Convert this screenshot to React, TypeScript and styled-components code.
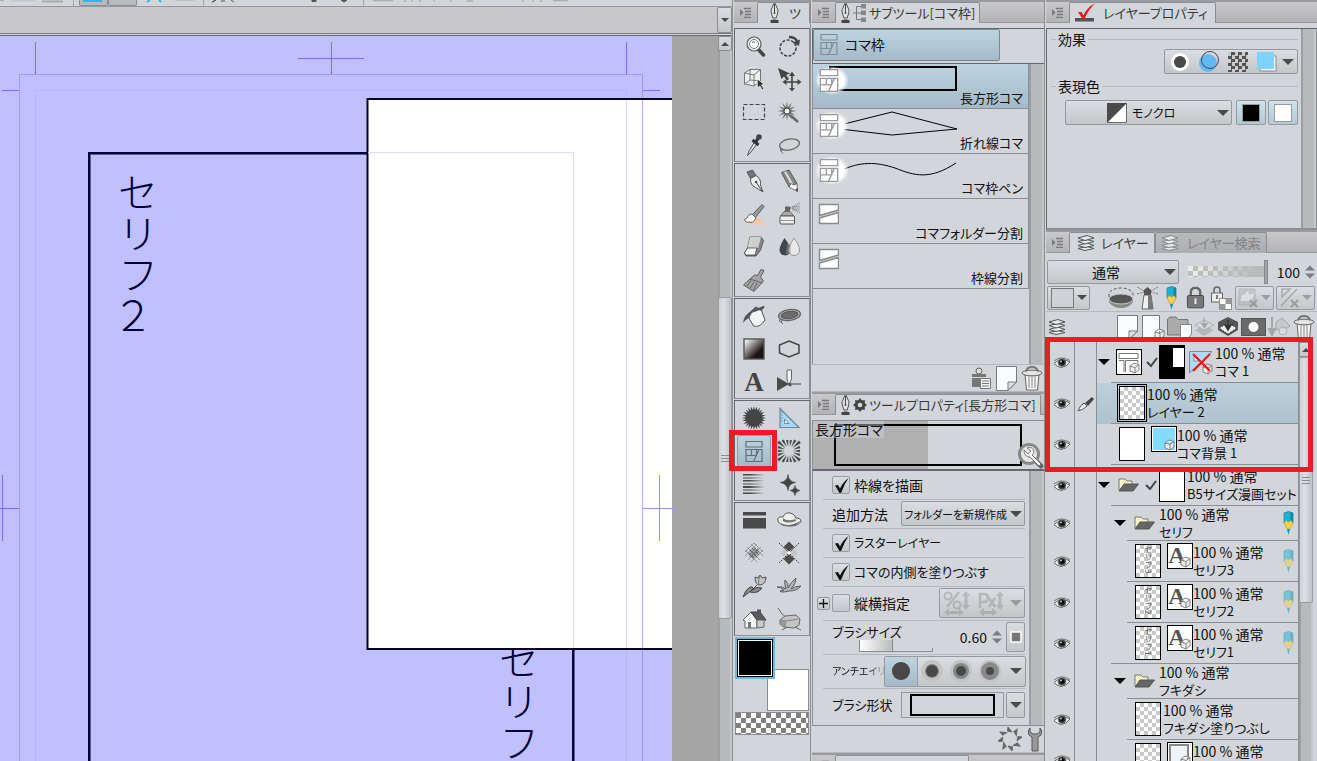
import React from 'react';
import styled, { createGlobalStyle, css } from 'styled-components';

const C = {
  panel: '#d2d6db',
  track: '#b8b9bd',
  line: '#8b8d92',
  soft: '#b6b9bd',
  dark: '#66686c',
  ink: '#4a4a4a',
  text: '#101010',
};
const blue = 'linear-gradient(#bdd4e0, #a5bac7)';
const metal = 'linear-gradient(#dadde1, #c4c6ca)';

const Global = createGlobalStyle`
  *, *::before, *::after { box-sizing: border-box; }
  body {
    margin: 0;
    background: ${C.panel};
    color: ${C.text};
    font-family: "Noto Sans CJK JP", "Liberation Sans", sans-serif;
    font-feature-settings: "palt";
    font-size: 14px;
    line-height: 18px;
  }
  button, select, input { font: inherit; font-feature-settings: inherit; color: inherit; margin: 0; }
  h2, ul, p, fieldset, legend { margin: 0; padding: 0; border: 0; font: inherit; }
  ul { list-style: none; }
  svg { display: block; flex: none; }
`;

/* ---------- layout ---------- */
const App_ = styled.div`
  display: flex;
  height: 100vh;
  overflow: hidden;
`;
const Workspace = styled.main`
  flex: 1;
  min-width: 0;
  display: flex;
  flex-direction: column;
  border-right: 1px solid ${C.line};
`;
const Dock = styled.aside<{ $w: number }>`
  flex: none;
  width: ${(p) => p.$w}px;
  display: flex;
  flex-direction: column;
  padding-left: 1px;
  min-height: 0;
  border-right: 1px solid ${C.line};
  &:last-child { border-right: 0; }
`;
const TabBar = styled.div`
  flex: none;
  display: flex;
  align-items: flex-end;
  height: 23px;
  background: linear-gradient(#c9c9cc, #b3b3b6);
  border-top: 2px solid #9a9b9f;
  border-bottom: 1px solid #97989c;
  padding-left: 1px;
`;
const MenuButton = styled.button`
  width: 22px;
  height: 20px;
  padding: 0;
  border: 0;
  background: none;
  display: grid;
  place-items: center;
`;
const Tab = styled.button<{ $active?: boolean; $w?: number }>`
  display: flex;
  align-items: center;
  gap: 2px;
  height: 21px;
  margin-bottom: -1px;
  padding: 0 4px;
  flex: ${(p) => (p.$w ? 'none' : '1')};
  width: ${(p) => (p.$w ? p.$w + 'px' : 'auto')};
  border: 1px solid ${C.line};
  border-bottom: 0;
  border-radius: 2px 2px 0 0;
  background: ${(p) => (p.$active ? C.panel : 'linear-gradient(#b9babe, #acadb1)')};
  color: ${(p) => (p.$active ? '#383838' : '#828387')};
  font-size: 13px;
  line-height: 20px;
  white-space: nowrap;
  overflow: hidden;
`;
const Flex1 = styled.div`flex: 1; min-width: 0;`;
const Spacer = styled.span<{ $w: number }>`flex: none; width: ${(p) => p.$w}px;`;
const Sized = styled.span<{ $s: number }>`font-size: ${(p) => p.$s}px;`;

/* ---------- scroll bars ---------- */
const ScrollTrack = styled.div<{ $w?: number }>`
  flex: none;
  width: ${(p) => p.$w ?? 15}px;
  background: linear-gradient(90deg, #9c9ea2 2px, ${C.track} 2px, ${C.track} 86%, #c6c7ca 86%);
  display: flex;
  flex-direction: column;
  overflow: hidden;
`;
const ScrollArrow = styled.button`
  flex: none;
  height: 15px;
  padding: 0;
  border: 1px solid ${C.line};
  border-radius: 2px;
  background: ${metal};
  display: grid;
  place-items: center;
`;
const ScrollThumb = styled.div<{ $top: number; $h: number }>`
  flex: none;
  margin-top: ${(p) => p.$top}px;
  height: ${(p) => p.$h}px;
  border: 1px solid #9b9da1;
  border-radius: 2px;
  background: linear-gradient(90deg, #cdd0d4, #dcdfe3 40%, #bdc0c4);
  display: grid;
  place-items: center;
`;
const Grip = () => (
  <svg width="8" height="9" viewBox="0 0 8 9" stroke="#8a8c90"><path d="M0 1.500h8M0 4.500h8M0 7.500h8" /></svg>
);
const Tri = ({ w = 12, up, color = C.ink }: { w?: number; up?: boolean; color?: string }) => (
  <svg width={w} height={w / 2} viewBox="0 0 12 6" fill={color}>
    <path d={up ? 'M0 6L6 0L12 6Z' : 'M0 0H12L6 6Z'} />
  </svg>
);

/* ---------- workspace ---------- */
const CommandBar = styled.div`
  flex: none;
  display: flex;
  height: 7px;
  border-bottom: 1px solid #97989c;
  overflow: hidden;
`;
const CommandGroup = styled.div<{ $w?: number }>`
  flex: ${(p) => (p.$w ? 'none' : '1')};
  width: ${(p) => (p.$w ? p.$w + 'px' : 'auto')};
  border-right: 1px solid #a3a5a9;
`;
const CommandButton = styled.button<{ $blue?: boolean }>`
  width: 29px;
  height: 6px;
  padding: 0 5px 3px 3px;
  border: 1px solid ${C.line};
  border-top: 0;
  border-radius: 0 0 2px 2px;
  background: ${(p) => (p.$blue ? 'linear-gradient(#38b4e4, #38b4e4) content-box, ' : '')}#b9babd;
`;
const DocTabs = styled.div`
  flex: none;
  display: flex;
  justify-content: flex-end;
  height: 29px;
  padding-bottom: 2px;
  background: #c8c8ca;
  border-bottom: 1px solid ${C.dark};
  box-shadow: inset 0 -1px #d8d9dc, inset 0 -2px #77787c;
`;
const DocMenu = styled(ScrollArrow)`
  width: 15px;
  height: 26px;
`;
const CanvasArea = styled.div`
  flex: 1;
  min-height: 0;
  display: flex;
  position: relative;
`;
const Paper = styled.div`
  flex: 1;
  background: #c0c0ff;
`;
const Pasteboard = styled.div`
  flex: none;
  width: 46px;
  background: #a5a5a5;
`;
const Drawing = styled.svg`
  position: absolute;
  inset: 0;
  overflow: visible;
  font-family: "Noto Sans CJK JP", sans-serif;
  font-size: 41px;
  font-weight: 300;
`;
const VerticalText = styled.text`
  writing-mode: vertical-rl;
  fill: #000038;
`;

const Canvas = () => (
  <CanvasArea>
    <Paper />
    <Pasteboard />
    <ScrollTrack $w={14}>
      <ScrollArrow aria-label="上へ"><Tri w={8} up /></ScrollArrow>
      <ScrollThumb $top={246} $h={322}><Grip /></ScrollThumb>
    </ScrollTrack>
    <Drawing width="676" height="725" viewBox="0 36 676 725">
      <VerticalText x="138" y="172">セリフ２</VerticalText>
      <VerticalText x="519" y="640">セリフ</VerticalText>
      <g fill="none" stroke="#7272ff">
        <path d="M35.500 42V74M626.500 42V74M331.500 42V74M298 58.500H364M2 90.500H19M643 90.500H660M2.500 475V541M0 508.500H19" />
        <path stroke="#9a9aff" d="M19.500 761V74.500H642.500V761" />
        <path stroke="#b4b4ff" d="M35.500 761V90.500H626.500V761" />
      </g>
      <path d="M89.500 761V153.500H368M573.500 648V761" fill="none" stroke="#5a5a9c" strokeWidth="3" />
      <path d="M89 761V153H368M573 648V761" fill="none" stroke="#05053c" strokeWidth="2" />
      <path d="M672 99H367.500V649H672" fill="#fff" stroke="#05051c" strokeWidth="2" />
      <g fill="none">
        <path stroke="#dcdcfb" d="M368 152.500H573.500V648" />
        <path stroke="#d8d8ff" d="M626.500 100V648" />
        <path stroke="#b2b2ff" d="M642.500 100V648" />
        <path stroke="#9292ff" d="M643 508.500H676M659.500 475V541" />
      </g>
    </Drawing>
  </CanvasArea>
);

/* ---------- tool icons ---------- */
const burst = (cx: number, cy: number, r: number, q: number, n: number) => {
  let d = '';
  for (let i = 0; i < n * 2; i++) {
    const a = (i * Math.PI) / n;
    const k = i % 2 ? q : r;
    d += `${i ? 'L' : 'M'}${(cx + k * Math.sin(a)).toFixed(1)} ${(cy - k * Math.cos(a)).toFixed(1)}`;
  }
  return d + 'Z';
};
const rays = (n: number) => {
  let d = '';
  for (let i = 0; i < n; i++) {
    const a = ((i + 0.5) * 2 * Math.PI) / n;
    const b = 0.11;
    const m = 11 / Math.max(Math.abs(Math.sin(a)), Math.abs(Math.cos(a)));
    d += `M${(12 + 4.5 * Math.sin(a)).toFixed(1)} ${(12 - 4.5 * Math.cos(a)).toFixed(1)}L${(12 + m * Math.sin(a - b)).toFixed(1)} ${(12 - m * Math.cos(a - b)).toFixed(1)}L${(12 + m * Math.sin(a + b)).toFixed(1)} ${(12 - m * Math.cos(a + b)).toFixed(1)}Z`;
  }
  return d;
};

const FrameGlyph = ({ color = '#7d8d96', fill = 'none' }: { color?: string; fill?: string }) => (
  <g stroke={color} strokeWidth="1.200">
    <path d="M4 2.500H20V8H4ZM4 10.500H20V22.500H4Z" fill={fill} />
    <path d="M9.500 10.500V16.500M4 16.500H14.500M17 10.500L11.500 22.500M14.500 10.500V16.500" fill="none" />
  </g>
);

const icons: Record<string, React.ReactNode> = {
  zoom: (<>
    <path d="M16 15L21.500 21" stroke="#444" strokeWidth="3.500" strokeLinecap="round" />
    <circle cx="12" cy="10" r="7" fill="#f4f4f4" stroke="#555" strokeWidth="1.200" />
    <circle cx="12" cy="10" r="4.500" fill="#fff" stroke="#777" /><path d="M10 8.500q1.500-1.500 3 0" stroke="#555" fill="none" />
  </>),
  rotate: (<>
    <circle cx="11" cy="14" r="8" fill="none" stroke="#444" strokeWidth="1.500" strokeDasharray="3 1.500" />
    <path d="M12 3q6 0 8 4" stroke="#444" strokeWidth="2.500" fill="none" /><path d="M15.500 8.500L23 5.500L22 12Z" fill="#444" />
  </>),
  cube: (<>
    <path d="M2.500 6L8 2.500H18.500V14L12 19L2.500 17Z" fill="#f0f1f2" />
    <path d="M2.500 6L8 2.500H18.500V14L12 19L2.500 17ZM2.500 6L12 8V19M12 8L18.500 2.500M8 2.500V13L2.500 17M8 13L18.500 14" fill="none" stroke="#777" />
    <path d="M15 12L22 17L19.500 18L22 22L20 23L18 19L15.500 21Z" fill="#333" stroke="#fff" strokeWidth=".7" />
  </>),
  move: (<>
    <path d="M1 1L13 6.500L9 8L12 12L10 13.500L7 9.500L4.500 12Z" fill="#444" />
    <path d="M15 7V23M7 15H23" stroke="#444" strokeWidth="1.600" />
    <path d="M15 4.500L12 9H18ZM15 24.500L12 21H18ZM5.500 15L9.500 12V18ZM24.500 15L20.500 12V18Z" fill="#444" />
  </>),
  marquee: <rect x="1.500" y="4.500" width="21" height="15" fill="none" stroke="#444" strokeWidth="1.200" strokeDasharray="4 2" />,
  wand: (<>
    <path d="M13 15L21 22" stroke="#666" strokeWidth="2.500" /><path d={burst(10, 11, 9.5, 4, 12)} fill="#777" />
    <circle cx="10" cy="11" r="3" fill="#f5f5f5" stroke="#444" />
  </>),
  dropper: (<>
    <path d="M12.500 9L7 18L5.500 22.500L9 19L15 11" fill="#ddd" stroke="#555" />
    <path d="M10.500 7L16.500 12M14 9L16.500 4" stroke="#333" strokeWidth="3" /><circle cx="17" cy="4" r="2.800" fill="#444" />
  </>),
  lasso: (<>
    <ellipse cx="12.500" cy="11.500" rx="10" ry="5.500" transform="rotate(-10 12.500 11.500)" fill="none" stroke="#666" strokeWidth="1.300" />
    <path d="M4 15q-1.500 2.500 0 3q2 0 1-2.500M4 18l2 2.500" stroke="#666" fill="none" />
  </>),
  pen: (<>
    <path d="M5 3L10.500 1L14 6.500L8.500 9.500Z" fill="#777" stroke="#444" strokeWidth=".8" />
    <path d="M8.500 9.500L14 6.500Q19.500 10 18.500 16L21 23L13.500 18.500Q8 16 8.500 9.500Z" fill="#eee" stroke="#555" />
    <circle cx="14" cy="13" r="1.200" fill="#444" /><path d="M14 13L20 22" stroke="#444" />
  </>),
  pencil: (<>
    <path d="M4.500 3.500L12 1L20 14.500L12 18Z" fill="#888" stroke="#444" strokeWidth=".8" /><path d="M8 2.500L15.500 16" stroke="#ddd" strokeWidth="2" />
    <path d="M12 18L14 14.500L17 16L20 14.500L20.500 22.500Z" fill="#f6f6f6" stroke="#555" strokeWidth=".8" /><path d="M18.500 20.500L20.500 23V19Z" fill="#333" />
  </>),
  brush: (<>
    <path d="M3 18L10 16L21 16.500L18 18.500L24 22.500H7Z" fill="#f9c6a0" />
    <path d="M10 13L20 2.500L22 4.500L13 16Z" fill="#999" stroke="#444" strokeWidth=".8" />
    <path d="M10 12L14 16Q11 22 7 20Q3 21 2.500 17.500Q5 17 6 14Q8 11.500 10 12Z" fill="#f6f6f6" stroke="#666" />
  </>),
  airbrush: (<>
    <path d="M13 6L23 1M13 6L23 11M15 6H23M16 5L23 4M16 7L23 8.500" stroke="#777" strokeDasharray="1.500 1" />
    <path d="M8 4.500H13V9.500H8Z" fill="#666" /><path d="M7 9.500H13L17 14H3.500Z" fill="#aaa" stroke="#555" strokeWidth=".8" />
    <rect x="3" y="14" width="14.500" height="8" rx="1" fill="#eee" stroke="#555" /><path d="M4 18.500H17" stroke="#999" />
  </>),
  eraser: (<>
    <path d="M8 2H19L21.500 5.500L18.500 15L14 21H4L2.500 18L5.500 13Z" fill="#888" stroke="#444" strokeWidth=".8" />
    <path d="M8 2H19L16 13L5.500 13Z" fill="#d0d0d0" /><path d="M5.500 13H15L13 20H4L2.500 18Z" fill="#f8f8f8" stroke="#444" strokeWidth=".8" />
  </>),
  drops: (<>
    <path d="M7.500 3Q13.500 11 13.500 15A5.500 5.500 0 0 1 2.500 15Q2.500 11 7.500 3Z" fill="#3f474d" />
    <path d="M17 3Q23 11 22.500 15A5.500 5.500 0 0 1 11.500 15Q12 11 17 3Z" fill="#e9e9e9" stroke="#888" strokeWidth=".8" /><path d="M10 9L13.500 9V19L9 19Z" fill="#888" opacity=".6" />
  </>),
  blend: (<>
    <path d="M19 1.500L22 2.500L18.500 9L21.500 13L12 23.500L1.500 17L8 11L12.500 7L15.500 7.500Z" fill="#a6a6a6" stroke="#5a5a5a" />
    <path d="M8 11L20 15M5 18L9 12.500M8 20L12 14M11.500 22L15 15" stroke="#5f5f5f" fill="none" />
  </>),
  bucket: (<>
    <path d="M8 9L19 5L23 16Q18 24 11.500 22L7 14Z" fill="#f4f4f4" stroke="#555" />
    <path d="M19 6L22 2.500L12 7M7 10L14 3.500L19 6" fill="none" stroke="#555" strokeWidth="1.800" /><path d="M1 19Q2 10 10 7L9 11Q7 12 7 14Q4 15 1 19Z" fill="#555" />
  </>),
  lassoFill: (<>
    <ellipse cx="12.500" cy="11" rx="11" ry="5.500" transform="rotate(-8 12.500 11)" fill="#b5b5b5" stroke="#666" strokeWidth="1.300" />
    <ellipse cx="12.500" cy="11" rx="8.500" ry="3.500" transform="rotate(-8 12.500 11)" fill="#6c6c6c" stroke="#555" /><path d="M3 15q-1.500 3 1 3q2-1 0-3M4 18l2 2" stroke="#666" fill="none" />
  </>),
  gradient: (<>
    <defs><linearGradient id="gr" x1="0" y1="0" x2="1" y2="1"><stop offset=".05" stopColor="#fff" /><stop offset=".7" stopColor="#1c1414" /></linearGradient></defs>
    <rect x="2" y="2" width="20" height="20" fill="url(#gr)" stroke="#555" strokeWidth="1.400" />
  </>),
  hexagon: <path d="M12 4L22 8V16L12 20L2.500 16V8Z" fill="none" stroke="#444" strokeWidth="1.500" />,
  text: <text x="12" y="21" textAnchor="middle" fontFamily="Liberation Serif, serif" fontWeight="700" fontSize="27" fill="#444">A</text>,
  balloon: (<>
    <path d="M0 7L12 14L0 21Z" fill="#4a4a4a" /><path d="M12 14H24" stroke="#777" strokeWidth="1.600" />
    <path d="M10 0V9L12 16L14.500 9V0Z" fill="#f4f4f4" stroke="#666" /><path d="M12 13l2 3" stroke="#444" strokeWidth="1.500" />
  </>),
  burst: <path d={burst(12, 12, 12, 8, 24)} fill="#444" />,
  ruler: (<>
    <path d="M3 2.500V21.500H22Z" fill="#a4d8f4" stroke="#6f8796" strokeWidth="1.200" /><path d="M7.500 13V17.500H12Z" fill="#fff" stroke="#6f8796" />
    <path d="M4 6h1.500M4 9h1.500M4 12h1.500M4 15h1.500" stroke="#6f8796" />
  </>),
  frame: <FrameGlyph color="#5f7079" />,
  rays: <path d={rays(18)} fill="#4a4a4a" />,
  lines: (<>
    <defs><linearGradient id="ln"><stop offset=".3" stopColor="#4a4a4a" /><stop offset="1" stopColor="#4a4a4a" stopOpacity="0" /></linearGradient></defs>
    <path d="M1 2h22v1.500H1zM1 5.500h19v1H1zM1 8h22v1.500H1zM1 11.500h20v1H1zM1 14h22v2H1zM1 17.500h18v1H1zM1 20.500h22v1.500H1z" fill="url(#ln)" />
  </>),
  sparkle: <path d="M11 2.500Q11.500 9.500 18.500 10.500Q11.500 11.500 11 18.500Q10.500 11.500 3 10.500Q10.500 9.500 11 2.500ZM18 13.500Q18.500 18 23 18.500Q18.500 19 18 23.500Q17.500 19 13 18.500Q17.500 18 18 13.500Z" fill="#444" stroke="#444" strokeWidth=".6" />,
  bars: <path d="M1 4H24V7.500H1ZM1 10H24V20.500H1Z" fill="#4a4a4a" />,
  hat: (<>
    <path d="M1 13Q0 8 6 9Q8 4 13 5Q18 6 18.500 10Q24 10 24 13Q22 18 13 18Q3 18 1 13Z" fill="#eee" stroke="#555" />
    <path d="M6 10Q10 14 18.500 11L19 13Q10 16 6 13Z" fill="#777" /><path d="M3 15Q12 20 23 13Q20 18 13 18Q5 18 3 15Z" fill="#666" />
  </>),
  mesh: (<g stroke="#555" fill="none">
    <path d="M3 9L15 21M5 6L18 19M9 3L21 15M12 2L21 11M12 2L3 11M15 3L3 15M19 6L6 19M21 9L9 21" strokeWidth=".9" opacity=".5" /><path d="M8 9L15 16M10 7L17 14M7 12L12 17M14 7L7 14M17 10L10 17M16 8L8 16" strokeWidth="1.200" opacity=".8" />
  </g>),
  diamonds: (<>
    <path d="M2 2L22 22M22 2L2 22" stroke="#444" strokeDasharray="2 1" /><path d="M6.500 6L12 0.500L17.500 6L12 10.500ZM6.500 18L12 13L17.500 18L12 23.500Z" fill="#4a4a4a" />
    <path d="M3 12L7 8L11 12L7 16ZM13 12L17 8L21 12L17 16Z" fill="#c4c4c4" /><path d="M12 10L14 12L12 14L10 12Z" fill="#fff" />
  </>),
  tulip: (<>
    <path d="M15 11L10 16L1 23Q3 16 8 13Q12 12 10 16Q15 12 20 14Q16 20 8 18" fill="#8a8a8a" stroke="#444" />
    <path d="M13 3L16 4L18 1L20 4L24 3Q24 10 18 11Q13 11 13 3Z" fill="#c4c4c4" stroke="#555" /><path d="M18 2Q15 8 18 11" stroke="#777" fill="none" />
  </>),
  leaves: <path d="M0 13Q6 12 9 15Q7 9 8 6Q12 9 11 14Q14 8 19 4Q19 10 14 15Q19 12 24 12Q20 17 12 17Q4 19 3 17L7 16Q4 13 0 13Z" fill="#b5b5b5" stroke="#5a5a5a" />,
  house: (<>
    <path d="M1 13L9 5L15 13V21H3V14Z" fill="#f4f4f4" stroke="#666" /><path d="M9 5L18 5L24 13H15Z" fill="#5a5a5a" stroke="#444" /><path d="M15 2.500H19V6H15Z" fill="#555" />
    <path d="M15 13H22V20L15 21Z" fill="#ccc" stroke="#666" /><path d="M6 15H9V21H6Z" fill="#777" />
  </>),
  rock: (<>
    <path d="M1 1L5 7L9 10M5 23L10 20M18 20L24 23" stroke="#666" fill="none" /><path d="M3 13L8 9L19 8L23 12L22 18L17 21L7 20L3 17Z" fill="#c4c4c4" stroke="#666" />
    <path d="M3 13L9 14L21 12M9 14L8 20" stroke="#888" fill="none" /><path d="M3 13L9 14L8 20L3 17Z" fill="#8c8c8c" opacity=".7" />
  </>),
};

const Glyph = ({ name }: { name: string }) => (
  <svg width="24" height="24" viewBox="0 0 24 24" overflow="visible">{icons[name]}</svg>
);

const toolGroups: [string, string][][] = [
  [['zoom', '虫めがね'], ['rotate', '回転'], ['cube', '操作'], ['move', 'レイヤー移動'], ['marquee', '選択範囲'], ['wand', '自動選択'], ['dropper', 'スポイト'], ['lasso', '投げなわ']],
  [['pen', 'ペン'], ['pencil', '鉛筆'], ['brush', '筆'], ['airbrush', 'エアブラシ'], ['eraser', '消しゴム'], ['drops', '色混ぜ'], ['blend', 'ブレンド']],
  [['bucket', '塗りつぶし'], ['lassoFill', '囲って塗る'], ['gradient', 'グラデーション'], ['hexagon', '図形'], ['text', 'テキスト'], ['balloon', 'フキダシ']],
  [['burst', 'フラッシュ'], ['ruler', '定規'], ['frame', 'コマ枠'], ['rays', '集中線'], ['lines', '流線'], ['sparkle', '効果']],
  [['bars', 'トーン'], ['hat', '服飾'], ['mesh', '網'], ['diamonds', '模様'], ['tulip', '花'], ['leaves', '草'], ['house', '建物'], ['rock', '自然物']],
];

const ToolStack = styled.div`
  display: flex;
  flex-direction: column;
  gap: 1px;
  margin-top: 5px;
`;
const ToolGroup = styled.div`
  display: grid;
  grid-template-columns: 1fr 1fr;
  grid-auto-rows: 33px;
  padding: 0 3px 0 1px;
  border: 1px solid ${C.dark};
  border-right-color: ${C.line};
  border-bottom-color: ${C.line};
`;
const ToolCell = styled.div`
  position: relative;
  display: grid;
  place-items: center;
`;
const ToolButton = styled.button<{ $on?: boolean }>`
  width: 34px;
  height: 32px;
  padding: 0;
  display: grid;
  place-items: center;
  border: 1px solid ${(p) => (p.$on ? '#8ba0ac' : 'transparent')};
  border-radius: 3px;
  background: ${(p) => (p.$on ? blue : 'none')};
`;
const Callout = styled.div<{ $tool?: boolean }>`
  position: absolute;
  pointer-events: none;
  border: 5px solid #ed1c24;
  z-index: 2;
  ${(p) =>
    p.$tool
      ? css`inset: -4px -6px -4px -7px;`
      : css`top: -5px; left: -1px; right: 4px; height: 135px;`}
`;
const Swatches = styled.div`
  display: grid;
  grid-template-columns: 32px 8px 34px;
  grid-template-rows: 32px 10px 32px 25px;
  margin: 1px 0 0 1px;
`;
const Foreground = styled.button`
  grid-area: 1 / 1 / 3 / 3;
  z-index: 1;
  background: #000;
  border: 2px solid #72b8dc;
  box-shadow: inset 0 0 0 1px #000, inset 0 0 0 2px #fff;
  padding: 0;
`;
const Background = styled.button`
  grid-area: 2 / 2 / 4 / 4;
  background: #fff;
  border: 1px solid ${C.line};
  padding: 0;
`;
const Transparent = styled.button`
  grid-area: 4 / 1 / 5 / 4;
  margin: 1px 0;
  padding: 0;
  border: 1px solid ${C.line};
  background: repeating-conic-gradient(#fff 0 25%, #808080 0 50%) 0 0 / 10px 10px;
`;

const NibIcon = () => (
  <svg width="11" height="22" viewBox="0 0 11 22">
    <path d="M5.500 0L9 8Q9 12 7 16H4Q2 12 2 8Z" fill="#e2e2e2" stroke="#555" /><path d="M5.500 2V10" stroke="#444" /><circle cx="5.500" cy="11" r="1" fill="#444" />
    <path d="M1.500 18H9.500V21.500H1.500Z" fill="#444" /><path d="M3.500 16H7.500V18H3.500Z" fill="#999" />
  </svg>
);
const MenuIcon = () => (
  <svg width="12" height="11" viewBox="0 0 12 11"><path d="M0 2L3.500 5.500L0 9Z" fill="#77797d" /><path d="M4 1.500H11M5 4.500H11M5 7.500H11M4 10.500H11" stroke="#77797d" strokeWidth="1.300" /></svg>
);
const PanelMenu = () => <MenuButton aria-label="メニュー"><MenuIcon /></MenuButton>;

const Tools = () => (
  <Dock $w={78}>
    <TabBar><PanelMenu /><Tab $active aria-label="ツール"><Spacer $w={5} /><NibIcon /><Spacer $w={5} />ツ</Tab></TabBar>
    <ToolStack>
      {toolGroups.map((g, i) => (
        <ToolGroup key={i}>
          {g.map(([name, label]) => (
            <ToolCell key={name}>
              <ToolButton $on={name === 'frame'} aria-label={label}><Glyph name={name} /></ToolButton>
              {name === 'frame' && <Callout $tool />}
            </ToolCell>
          ))}
        </ToolGroup>
      ))}
    </ToolStack>
    <Swatches>
      <Foreground aria-label="メインカラー" /><Background aria-label="サブカラー" /><Transparent aria-label="透明色" />
    </Swatches>
  </Dock>
);

/* ---------- sub tool panel ---------- */
const GroupRow = styled.div`
  flex: none;
  height: 36px;
  margin-top: 5px;
  padding: 0 0 2px;
  border: 1px solid ${C.dark};
  border-right: 0;
`;
const GroupButton = styled.button`
  display: flex;
  align-items: center;
  gap: 4px;
  width: 187px;
  height: 32px;
  padding: 0 3px 2px;
  border: 1px solid #78898f;
  border-radius: 2px;
  background: ${blue};
`;
const ListArea = styled.div<{ $h: number }>`
  flex: none;
  display: flex;
  height: ${(p) => p.$h}px;
  border-left: 1px solid ${C.line};
  border-bottom: 1px solid ${C.soft};
`;
const SubList = styled.ul`flex: 1; min-width: 0;`;
const SubItem = styled.li<{ $on?: boolean }>`
  display: flex;
  height: 45px;
  padding: 1px 5px 1px 2px;
  border-bottom: 1px solid ${C.line};
  border-right: 1px solid ${C.line};
  background: ${(p) => (p.$on ? blue : 'none')};
`;
const Stroke = styled.div`flex: none; width: 142px;`;
const SubLabel = styled.button`
  flex: 1;
  align-self: flex-end;
  display: flex;
  justify-content: flex-end;
  padding: 0;
  border: 0;
  background: none;
  font-size: 13px;
  white-space: nowrap;
`;
const Anchor = styled.div`
  flex: 1;
  min-width: 0;
  display: flex;
  flex-direction: row-reverse;
  align-items: flex-end;
`;
const Footer = styled.div`
  flex: none;
  display: flex;
  justify-content: flex-end;
  align-items: center;
  gap: 4px;
  height: 27px;
  padding-right: 1px;
  border-bottom: 1px solid ${C.soft};
`;
const IconButton = styled.button`
  flex: none;
  padding: 0;
  border: 0;
  background: none;
  display: grid;
  place-items: center;
`;

const SubPreview = ({ kind }: { kind: string }) =>
  kind === 'split' ? (
    <svg width="24" height="30" viewBox="0 0 24 30" fill="#fff" stroke="#8a8b8d" strokeWidth="1.500">
      <path d="M4.500 4.500H23.500V10L4.500 15.500ZM4.500 18L23.500 12.500V23.500H4.500Z" />
    </svg>
  ) : (
    <svg width="142" height="38" viewBox="0 0 142 38">
      <defs><radialGradient id="halo"><stop offset=".7" stopColor="#fff" /><stop offset="1" stopColor="#fff" stopOpacity="0" /></radialGradient></defs>
      {kind === 'rect' && <rect x="15" y="2" width="126" height="23" fill="none" stroke="#000" strokeWidth="2" />}
      {kind === 'poly' && <path d="M25 15L77 2L142 19L77 25L25 19" fill="none" stroke="#000" />}
      {kind === 'curve' && <path d="M25 16C45 6 62 7 80 13C100 21 115 25 141 8" fill="none" stroke="#000" />}
      <rect x="0" y="1" width="34" height="29" rx="8" fill="url(#halo)" />
      <svg x="1" y="2" width="26" height="26" viewBox="0 0 24 24"><FrameGlyph color="#9a9a9a" fill="#fff" /></svg>
    </svg>
  );

const subTools: [string, string][] = [
  ['rect', '長方形コマ'], ['poly', '折れ線コマ'], ['curve', 'コマ枠ペン'], ['split', 'コマフォルダー分割'], ['split', '枠線分割'],
];

const Trash = () => (
  <svg width="22" height="25" viewBox="0 0 22 25" stroke="#666">
    <path d="M4 8H18L16.500 24H5.500Z" fill="#f4f4f4" /><path d="M8 10V22M11 10V22M14 10V22" stroke="#888" /><ellipse cx="11" cy="7" rx="10" ry="2.800" fill="#e4e4e4" />
    <path d="M5 5.500Q6 1 11 1Q16 1 17 5.500" fill="none" stroke="#777" strokeWidth="1.800" />
  </svg>
);
const Page = () => (
  <svg width="21" height="25" viewBox="0 0 21 25" stroke="#77797c">
    <path d="M.5.5H20.500V16L12 24.500H.5Z" fill="#f9fbfc" /><path d="M12 24.500V16H20.500Z" fill="#dfe2e4" />
  </svg>
);

/* ---------- tool property panel ---------- */
const Preview = styled.div`
  flex: none;
  display: grid;
  grid-template-columns: 1fr;
  height: 51px;
  margin-top: 5px;
  border: 1px solid ${C.line};
  border-right: 0;
  border-bottom: 2px solid ${C.dark};
  background: linear-gradient(90deg, #b0b0b1 50%, transparent 50%);
  position: relative;
`;
const PreviewShape = styled.div`
  border: 2px solid #000;
  margin: 3px 22px 3px 21px;
`;
const PreviewLabel = styled.span`
  position: absolute;
  left: 0;
  top: 0;
  width: 71px;
  padding: 0 2px;
  line-height: 17px;
  background: rgba(210, 214, 219, 0.45);
  white-space: nowrap;
`;
const PreviewTool = styled(IconButton)`
  position: absolute;
  right: 0;
  bottom: 0;
`;
const PropArea = styled.div`
  flex: none;
  display: flex;
  height: 255px;
  border-left: 1px solid ${C.line};
  border-bottom: 1px solid ${C.line};
`;
const PropRows = styled.div`flex: 1; min-width: 0; padding: 0 4px 0 4px;`;
const PropRow = styled.div<{ $h?: number; $flush?: boolean; $last?: boolean }>`
  display: flex;
  align-items: center;
  gap: 2px;
  height: ${(p) => p.$h ?? 29}px;
  padding: 0 0 2px ${(p) => (p.$flush ? 0 : 15)}px;
  background: ${(p) => (p.$last ? 'none' : `linear-gradient(${C.soft}, ${C.soft}) right bottom / calc(100% - 6px) 1px no-repeat`)};
  white-space: nowrap;
`;
const CheckLabel = styled.label`display: flex; align-items: center; gap: 4px;`;
const CheckBox = styled.span`
  display: grid;
  width: 18px;
  height: 18px;
  > * { grid-area: 1 / 1; }
  > svg { pointer-events: none; }
  > input { appearance: none; width: 18px; height: 18px; border: 1px solid #999ca1; border-radius: 2px; background: ${metal}; }
`;
const Check = ({ label, checked, size = 14 }: { label: string; checked?: boolean; size?: number }) => (
  <CheckLabel>
    <CheckBox>
      <input type="checkbox" defaultChecked={checked} />
      {checked && <svg width="18" height="18" viewBox="0 0 18 18"><path d="M3 9.500L6 9L8 12.500Q11 6 16.500 2Q12 9 9 17H7.500Z" fill="#111" /></svg>}
    </CheckBox>
    <Sized $s={size}>{label}</Sized>
  </CheckLabel>
);
const SelectBox = styled.span<{ $w: number; $h: number; $pad?: number; $s?: number }>`
  display: grid;
  flex: none;
  align-items: center;
  justify-items: end;
  width: ${(p) => p.$w}px;
  height: ${(p) => p.$h}px;
  > * { grid-area: 1 / 1; }
  > svg { margin-right: 3px; pointer-events: none; }
  > select {
    appearance: none;
    width: 100%;
    height: 100%;
    padding: 0 0 0 ${(p) => p.$pad ?? 2}px;
    border: 1px solid #95989d;
    border-radius: 2px;
    background: ${metal};
    font-size: ${(p) => p.$s ?? 14}px;
  }
  > svg.lead { justify-self: start; margin-left: 42px; }
`;
const Bar = styled.div<{ $w: number; $h: number; $dim?: boolean }>`
  display: flex;
  flex: none;
  align-items: center;
  width: ${(p) => p.$w}px;
  height: ${(p) => p.$h}px;
  border: 1px solid #95989d;
  border-radius: 2px;
  background: ${metal};
  ${(p) => p.$dim && css`padding-left: 2px; gap: 5px; > * { opacity: 0.4; }`}
`;
const BarArrow = styled.span`margin: 0 3px 0 auto;`;
const BarButton = styled(IconButton)<{ $on?: boolean }>`
  width: 29px;
  height: 100%;
  background: ${(p) => (p.$on ? blue : 'none')};
  ${(p) => p.$on && css`width: 33px; border-right: 1px solid #8ba0ac;`}
`;
const SmallButton = styled.button<{ $w: number; $h: number; $blue?: boolean; $dim?: boolean }>`
  flex: none;
  display: flex;
  align-items: center;
  justify-content: center;
  gap: 3px;
  width: ${(p) => p.$w}px;
  height: ${(p) => p.$h}px;
  padding: 0;
  border: 1px solid #95989d;
  border-radius: 2px;
  background: ${(p) => (p.$blue ? 'linear-gradient(#cfe3ed, #b3c9d5)' : metal)};
  ${(p) => p.$dim && css`> * { opacity: 0.4; }`}
`;
const SizeLabel = styled.label`
  display: flex;
  flex-direction: column;
  width: 101px;
  font-size: 13px;
  line-height: 17px;
  > input {
    appearance: none;
    width: 74px;
    height: 12px;
    margin-left: 27px;
    background: linear-gradient(90deg, #fff, #bbb) 0 0 / 32px 100% no-repeat,
      linear-gradient(${C.line}, ${C.line}) right bottom / 1px 3px no-repeat;
    border: 0 solid ${C.line};
    border-width: 0 0 1px 1px;
  }
  > input::-webkit-slider-thumb { appearance: none; width: 1px; height: 12px; background: ${C.line}; }
`;
const NumberInput = styled.input<{ $w: number }>`
  width: ${(p) => p.$w}px;
  padding: 0;
  border: 0;
  background: none;
  text-align: right;
`;
const Spin = () => (
  <svg width="10" height="14" viewBox="0 0 10 14" fill="#7c7e82"><path d="M0 5.500L5 .5L10 5.500ZM0 8.500H10L5 13.500Z" /></svg>
);
const FadeLabel = styled.span`
  flex: none;
  font-size: 10px;
  margin-right: -6px;
  -webkit-mask-image: linear-gradient(90deg, #000 60%, rgba(0, 0, 0, 0.15));
  mask-image: linear-gradient(90deg, #000 60%, rgba(0, 0, 0, 0.15));
`;
const ShapeBox = styled.div`
  flex: none;
  width: 103px;
  height: 26px;
  padding: 1px 8px;
  border: 1px solid #95989d;
  &::before { content: ''; display: block; height: 22px; border: 2px solid #000; }
`;

const Dot = ({ r, glow }: { r: number; glow: number }) => (
  <svg width="24" height="24" viewBox="0 0 24 24">
    <circle cx="12" cy="12" r="11" fill="#c3c3c4" opacity={glow ? 1 : 0} /><circle cx="12" cy="12" r={r + glow} fill="#888" /><circle cx="12" cy="12" r={r} fill="#484848" />
  </svg>
);
const WrenchPath = 'M3 1Q0 4 2 8L5 10V24H11V10L14 8Q16 4 13 1V5L10 7H6L3 5Z';

const SubDock = () => (
  <Dock $w={234}>
    <TabBar>
      <PanelMenu />
      <Tab $active $w={145}>
        <NibIcon />
        <svg width="14" height="20" viewBox="0 0 14 20"><path d="M8 3.500H3.500V16.500H8M0 10H8" fill="none" stroke="#777" /><path d="M8 1h5v4.500H8zM8 7.500h5v4.500H8zM8 14.500h5v4.500H8z" fill="#888" /></svg>
        サブツール[コマ枠]
      </Tab>
    </TabBar>
    <GroupRow>
      <GroupButton>
        <svg width="24" height="26" viewBox="0 0 24 24"><FrameGlyph /></svg>コマ枠
      </GroupButton>
    </GroupRow>
    <ListArea $h={301}>
      <SubList>
        {subTools.map(([kind, label], i) => (
          <SubItem key={label} $on={i === 0}>
            <Stroke><SubPreview kind={kind} /></Stroke>
            <Anchor><SubLabel>{label}</SubLabel></Anchor>
          </SubItem>
        ))}
      </SubList>
      <ScrollTrack />
    </ListArea>
    <Footer>
      <IconButton aria-label="素材登録">
        <svg width="22" height="22" viewBox="0 0 22 22"><circle cx="9" cy="4" r="3" fill="#ddd" stroke="#666" /><path d="M2 10H16V7H2ZM2 11H16V20H2Z" fill="#777" /><path d="M10.500 11.500H20.500V21.500H10.500Z" fill="#f4f4f4" stroke="#777" /><path d="M12 14H19M12 16.500H19M12 19H19" stroke="#777" /></svg>
      </IconButton>
      <IconButton aria-label="複製"><Page /></IconButton>
      <IconButton aria-label="削除"><Trash /></IconButton>
    </Footer>
    <TabBar>
      <PanelMenu />
      <Tab $active $w={206}>
        <NibIcon />
        <svg width="14" height="14" viewBox="0 0 14 14"><path d={burst(7, 7, 7, 5, 8)} fill="#444" /><circle cx="7" cy="7" r="5" fill="#444" /><circle cx="7" cy="7" r="2.300" fill={C.panel} /></svg>
        ツールプロパティ[長方形コマ]
      </Tab>
    </TabBar>
    <Preview>
      <PreviewShape />
      <PreviewLabel>長方形コマ</PreviewLabel>
      <PreviewTool aria-label="サブツール詳細">
        <svg width="27" height="27" viewBox="0 0 27 27"><path d="M17 17L24 24" stroke="#666" strokeWidth="5" strokeLinecap="round" /><circle cx="12" cy="12" r="9.500" fill="#e6e6e6" stroke="#888" strokeWidth="3" /><path d="M7 8L11 12L14 9L10 6Q15 4 17 9Q17 12 15 13L24 22L22 24L13 15Q7 15 7 8Z" fill="#f8f8f8" stroke="#777" /></svg>
      </PreviewTool>
    </Preview>
    <PropArea>
      <PropRows>
        <PropRow><Check label="枠線を描画" checked /></PropRow>
        <PropRow>
          <label htmlFor="add">追加方法</label><Flex1 />
          <SelectBox $w={124} $h={25} $s={11}><select id="add"><option>フォルダーを新規作成</option></select><Tri /></SelectBox>
        </PropRow>
        <PropRow><Check label="ラスターレイヤー" checked size={12} /></PropRow>
        <PropRow><Check label="コマの内側を塗りつぶす" checked size={13} /></PropRow>
        <PropRow $h={34} $flush>
          <SmallButton $w={13} $h={13} aria-label="展開"><svg width="9" height="9" viewBox="0 0 9 9"><path d="M0 4.500H9M4.500 0V9" stroke="#111" strokeWidth="1.300" /></svg></SmallButton>
          <Check label="縦横指定" /><Flex1 />
          <Bar $w={86} $h={30} $dim>
            <svg width="30" height="26" viewBox="0 0 30 26" fill="none" stroke="#888"><circle cx="6" cy="6" r="3.500" strokeWidth="2" /><circle cx="15" cy="15" r="3.500" strokeWidth="2" /><path d="M17 2L5 17" strokeWidth="2.500" /><path d="M6 22.500H18M24 4V17" strokeWidth="3" /><path d="M7 18L2 22.500L7 26ZM17 18L22 22.500L17 26ZM20 6L24 1L28 6ZM20 15L24 20L28 15Z" fill="#888" stroke="none" /></svg>
            <svg width="28" height="26" viewBox="0 0 28 26" fill="none" stroke="#888"><path d="M3 18V4H7Q11 4 11 8T7 12H3M12 8L18 17M18 8L12 17" strokeWidth="2.500" /><path d="M6 22.500H16M23 4V17" strokeWidth="3" /><path d="M7 18L2 22.500L7 26ZM15 18L20 22.500L15 26ZM19 6L23 1L27 6ZM19 15L23 20L27 15Z" fill="#888" stroke="none" /></svg>
            <BarArrow><Tri /></BarArrow>
          </Bar>
        </PropRow>
        <PropRow $h={34}>
          <SizeLabel>ブラシサイズ<input type="range" defaultValue={44} /></SizeLabel><Flex1 />
          <NumberInput $w={42} aria-label="ブラシサイズの値" defaultValue="0.60" /><Spacer $w={1} /><Spin /><Spacer $w={0} />
          <SmallButton $w={19} $h={30} aria-label="影響元設定"><svg width="12" height="12" viewBox="0 0 12 12"><rect x="1" y="1" width="10" height="10" fill="#777" stroke="#fff" strokeWidth="1.500" /></svg></SmallButton>
        </PropRow>
        <PropRow $h={34}>
          <FadeLabel>アンチエイリ</FadeLabel><Flex1 />
          <Bar $w={142} $h={31}>
            <BarButton $on aria-label="無し"><Dot r={9} glow={0} /></BarButton>
            <BarButton aria-label="弱"><Dot r={6} glow={1} /></BarButton>
            <BarButton aria-label="中"><Dot r={5} glow={3} /></BarButton>
            <BarButton aria-label="強"><Dot r={4} glow={5} /></BarButton>
            <BarArrow><Tri /></BarArrow>
          </Bar>
        </PropRow>
        <PropRow $h={34} $last>
          <Sized $s={13}>ブラシ形状</Sized><Flex1 /><ShapeBox /><SmallButton $w={19} $h={26} aria-label="形状を選択"><Tri /></SmallButton>
        </PropRow>
      </PropRows>
      <ScrollTrack />
    </PropArea>
    <Footer>
      <IconButton aria-label="初期設定に戻す">
        <svg width="26" height="24" viewBox="0 0 26 24" fill="#666">{[0, 45, 90, 135, 180, 225, 270, 315].map((a) => <path key={a} transform={`rotate(${a} 13 12)`} d="M11 0L15 5L10.500 4Z" stroke="#666" />)}</svg>
      </IconButton>
      <IconButton aria-label="詳細"><svg width="16" height="25" viewBox="0 0 16 25"><path d={WrenchPath} fill="#999" stroke="#555" /></svg></IconButton>
    </Footer>
    <TabBar><PanelMenu /><Tab $active $w={134}><Spacer $w={8} /><svg width="22" height="16" viewBox="0 0 22 16"><path d="M1 9Q6 3 14 3L10 9L6 15Z" fill="#555" /></svg></Tab></TabBar>
  </Dock>
);

/* ---------- layer property ---------- */
const LayerProps = styled.div`
  flex: none;
  display: flex;
  height: 202px;
  margin-top: 5px;
  border: 1px solid ${C.dark};
  border-right-color: ${C.line};
  border-bottom: 2px solid ${C.line};
`;
const LayerPropsBody = styled.div`flex: 1; padding: 1px 3px 0 4px;`;
const Section = styled.fieldset`
  display: flex;
  flex-direction: column;
  align-items: flex-end;
  height: 47px;
`;
const SectionHead = styled.legend`
  display: flex;
  align-items: center;
  gap: 2px;
  width: 100%;
  &::before { content: ''; width: 5px; height: 1px; background: ${C.soft}; }
  &::after { content: ''; flex: 1; height: 1px; background: ${C.soft}; }
`;
const SectionRow = styled.div<{ $top: number }>`display: flex; gap: 2px; margin-top: ${(p) => p.$top}px;`;
const Chip = styled.span<{ $c: string }>`
  width: 18px;
  height: 18px;
  border: 1px solid #999;
  background: ${(p) => p.$c};
`;
const ToneIcon = styled.span`
  width: 20px;
  height: 20px;
  background: repeating-conic-gradient(#555 0 25%, #ccc 0 50%) 0 0 / 7px 7px;
`;

/* ---------- layer panel ---------- */
const LayerControls = styled.div`flex: none; padding-top: 6px;`;
const LayerRow = styled.div<{ $h: number; $line?: boolean }>`
  display: flex;
  align-items: center;
  gap: 2px;
  height: ${(p) => p.$h}px;
  padding: 0 2px 0 1px;
  overflow: hidden;
  ${(p) => p.$line && css`border-bottom: 1px solid ${C.soft};`}
`;
const Opacity = styled.input`
  appearance: none;
  width: 80px;
  height: 24px;
  background: linear-gradient(90deg, transparent, #b9babc 90%) 0 6px / 76px 11px no-repeat,
    repeating-conic-gradient(#bebebe 0 25%, #efefef 0 50%) 0 6px / 10px 10px;
  mask: linear-gradient(#000 0 0) 0 6px / 100% 11px no-repeat, linear-gradient(#000 0 0) right / 4px 100% no-repeat;
  &::-webkit-slider-thumb { appearance: none; width: 4px; height: 24px; background: #a4a6aa; border: 1px solid #85878b; }
`;
const LayerList = styled.div`
  position: relative;
  flex: 1;
  min-height: 0;
  display: flex;
  padding-right: 4px;
`;
const Layers = styled.ul`
  flex: 1;
  min-width: 0;
  overflow: hidden;
  padding-left: 4px;
`;
const Layer = styled.li<{ $folder?: boolean }>`
  display: flex;
  height: ${(p) => (p.$folder ? 35 : 41)}px;
  line-height: ${(p) => (p.$folder ? 17 : 18)}px;
`;
const Gutter = styled.span<{ $w: number }>`
  flex: none;
  width: ${(p) => p.$w}px;
  display: grid;
  place-items: center;
  border-right: 1px solid ${C.line};
`;
const LayerBody = styled.div<{ $pad: number; $line: number; $on?: boolean }>`
  flex: 1;
  min-width: 0;
  display: flex;
  align-items: center;
  padding: 0 4px 1px ${(p) => p.$pad}px;
  border-right: 1px solid ${C.line};
  background: linear-gradient(${C.line}, ${C.line}) right bottom / calc(100% - ${(p) => p.$line}px) 1px no-repeat${(p) => (p.$on ? ', linear-gradient(#bccfda, #afc3ce)' : '')};
`;
const LayerText = styled.div`flex: 1; min-width: 0; white-space: nowrap;`;
const Mode = styled.p``;
const Name = styled.p`font-size: 13px;`;
const Thumb = styled.span<{ $k?: string }>`
  flex: none;
  width: 26px;
  height: 34px;
  border: 1px solid #000;
  background: ${(p) => (p.$k === 'alpha' || p.$k === 'sel' ? 'repeating-conic-gradient(#c9c9c9 0 25%, #fff 0 50%) 0 0 / 8px 8px' : '#fff')};
  ${(p) => p.$k === 'sel' && css`outline: 1px solid #000; outline-offset: 1px; margin: 0 2px 0 0;`}
  ${(p) => p.$k === 'mask' && css`background: linear-gradient(#fff, #fff) 13px 2px / 11px 19px no-repeat #000;`}
`;
const TextThumb = styled(Thumb)`
  writing-mode: vertical-rl;
  font-size: 8px;
  line-height: 24px;
  color: #555;
`;
const Gap = styled.span<{ $w: number }>`flex: none; width: ${(p) => p.$w}px;`;
const Raise = styled.span`flex: none; align-self: flex-start; margin-top: 2px;`;

const Eye = () => (
  <svg width="18" height="13" viewBox="0 0 18 13"><path d="M1 7.500Q8 1 17 6Q13 11.500 8 11.500Q4 11 1 7.500Z" fill="#f2f2f2" stroke="#666" /><path d="M1 5Q8-1 17 4.500" fill="none" stroke="#777" /><circle cx="9" cy="6.500" r="4" fill="#333" stroke="#888" strokeWidth=".8" /><circle cx="9" cy="6.500" r="2" fill="#000" /><circle cx="8" cy="5.500" r=".9" fill="#ddd" /></svg>
);
const Cube = ({ x = 13, y = 13 }: { x?: number; y?: number }) => (
  <path transform={`translate(${x} ${y})`} d="M1 4L5 1L10 2.500V8L6 11L1 9ZM1 4L6 5.500L10 2.500M6 5.500V11" fill="#eee" stroke="#777" strokeWidth=".9" />
);
const Box = ({ children, fill = '#fff' }: { children?: React.ReactNode; fill?: string }) => (
  <svg width="26" height="26" viewBox="0 0 26 26"><rect x=".5" y=".5" width="25" height="25" fill="#fff" stroke="#000" /><rect x="2" y="2" width="22" height="22" fill={fill} />{children}<Cube /></svg>
);
const ABox = () => <Box><text x="10" y="20" textAnchor="middle" fontFamily="Liberation Serif, serif" fontWeight="700" fontSize="24" fill="#555">A</text></Box>;
const Folder = () => (
  <svg width="21" height="14" viewBox="0 0 21 14"><path d="M1 12V1H7L9 3H14V6" fill="#fbf6c4" stroke="#777" /><path d="M1 13L6 6H20.500L15 13Z" fill="#666" stroke="#555" /></svg>
);
const Tick = () => <svg width="12" height="11" viewBox="0 0 12 11"><path d="M1 5L5 9L11 1" fill="none" stroke="#444" strokeWidth="2" /></svg>;
const Pencil = ({ dim }: { dim?: boolean }) => (
  <svg width="11" height="24" viewBox="0 0 11 24" opacity={dim ? 0.5 : 1}><path d="M1 2Q5.500-1 10 2V12H1Z" fill="#18b4d8" stroke="#1a7f9a" strokeWidth=".7" /><path d="M7.500 1V12H10V2Z" fill="#0e87a6" /><path d="M1 12L3 9.500L5.500 11L8 9.500L10 12L7 18H4Z" fill="#f5d050" stroke="#b89426" strokeWidth=".6" /><path d="M4 18H7L5.500 24Z" fill="#1293b5" /></svg>
);
const Disclosure = () => <Tri w={12} color="#000" />;
const Stack = ({ color = '#555' }: { color?: string }) => (
  <svg width="20" height="18" viewBox="0 0 20 18" fill="#e6e8ea" stroke={color}><path d="M2 14.500L11 12.500L18 14.500L9 16.500Z" /><path d="M2 11.500L11 9L18 11.500L9 13.500Z" /><path d="M2 7.500L11 5.500L18 7.500L9 10Z" /><path d="M2 4L11 1.500L18 4L9 6.500Z" /></svg>
);
const Lock = ({ s = 19 }: { s?: number }) => (
  <svg width={s} height={s * 1.2} viewBox="0 0 20 24"><path d="M5 11V7Q5 2 10 2T15 7V11" fill="none" stroke="#666" strokeWidth="2.500" /><rect x="1.500" y="10" width="17" height="13" rx="1.500" fill="#777" stroke="#444" /><path d="M10 13V19" stroke="#eee" strokeWidth="2" /></svg>
);

type L = { name: string; folder?: boolean; on?: boolean; pad: number; line: number; lead: React.ReactNode; pencil?: 'full' | 'dim' };
const textLayer = (n: string): L => ({
  name: 'セリフ' + n, pad: 38, line: n === '1' ? 14 : 30, pencil: 'dim',
  lead: <><TextThumb $k="alpha">セリフ{n}</TextThumb><Gap $w={6} /><Raise><ABox /></Raise></>,
});
const layers: L[] = [
  { name: 'コマ 1', pad: 1, line: 14, lead: <><Disclosure /><Gap $w={6} /><Box><path d="M3 4.500H22V9.500H3ZM3 11.500H8V23M9.500 11.500H22V14M9.500 11.500V23" fill="none" stroke="#777" /></Box><Gap $w={4} /><Tick /><Gap $w={1} /><Thumb $k="mask" /><Gap $w={4} />
    <svg width="26" height="25" viewBox="0 0 26 25"><path d="M.5 1.500H23L.5 23Z" fill="#a8dcf8" stroke="#7a8e99" /><path d="M5 6V11H10Z" fill="#fff" stroke="#7a8e99" /><Cube /><path d="M4 4L21 21M21 4L4 21" stroke="#f01010" strokeWidth="2" /></svg></> },
  { name: 'レイヤー 2', on: true, pad: 22, line: 14, lead: <Thumb $k="sel" /> },
  { name: 'コマ背景 1', pad: 22, line: 14, lead: <><Thumb /><Gap $w={6} /><Raise><Box fill="#82dcff" /></Raise></> },
  { name: 'B5サイズ漫画セット', pad: 1, line: 14, lead: <><Disclosure /><Gap $w={8} /><Folder /><Gap $w={6} /><Tick /><Gap $w={2} /><Thumb /><Gap $w={2} /></> },
  { name: 'セリフ', folder: true, pad: 17, line: 30, pencil: 'full', lead: <><Disclosure /><Gap $w={8} /><Folder /><Gap $w={4} /></> },
  textLayer('3'), textLayer('2'), textLayer('1'),
  { name: 'フキダシ', folder: true, pad: 17, line: 30, lead: <><Disclosure /><Gap $w={8} /><Folder /><Gap $w={4} /></> },
  { name: 'フキダシ塗りつぶし', pad: 38, line: 30, lead: <><Thumb $k="alpha" /><Gap $w={2} /></> },
  { name: '', pad: 38, line: 30, lead: <><Thumb $k="alpha" /><Gap $w={6} /><Raise><Box><rect x="3" y="3" width="18" height="20" fill="#eef3f7" stroke="#888" strokeWidth="2" /></Box></Raise></> },
];

const Btn = ({ label, children }: { label: string; children: React.ReactNode }) => <IconButton aria-label={label}>{children}</IconButton>;

const LayerDock = () => (
  <Dock $w={272}>
    <TabBar>
      <PanelMenu />
      <Tab $active $w={147}>
        <svg width="22" height="20" viewBox="0 0 22 20"><path d="M1 15H20V18.500H1Z" fill="#555" /><path d="M4 9L7.500 9L9.500 12.500Q13 4 21 .5Q14 7 10.500 16H8.500Z" fill="#dd1c1c" /></svg>
        <Spacer $w={3} />レイヤープロパティ
      </Tab>
    </TabBar>
    <LayerProps>
      <LayerPropsBody>
        <Section>
          <SectionHead>効果</SectionHead>
          <SectionRow $top={1}>
            <Bar $w={134} $h={25}>
              <BarButton aria-label="境界効果"><svg width="20" height="20" viewBox="0 0 20 20"><circle cx="10" cy="10" r="9" fill="#fff" /><circle cx="10" cy="10" r="6" fill="#484848" /></svg></BarButton>
              <BarButton aria-label="水彩境界"><svg width="22" height="22" viewBox="0 0 22 22"><circle cx="10" cy="12" r="9" fill="#66b8f2" /><circle cx="12" cy="9" r="8.500" fill="none" stroke="#445" /></svg></BarButton>
              <BarButton aria-label="トーン"><ToneIcon /></BarButton>
              <BarButton aria-label="レイヤーカラー"><svg width="22" height="22" viewBox="0 0 22 22"><rect x="4" y="5" width="16" height="15" fill="#fff" stroke="#888" /><rect x="1" y="1" width="17" height="17" fill="#7fd2fc" /></svg></BarButton>
              <BarArrow><Tri /></BarArrow>
            </Bar>
          </SectionRow>
        </Section>
        <Section>
          <SectionHead>表現色</SectionHead>
          <SectionRow $top={5}>
            <SelectBox $w={167} $h={25} $pad={66} $s={12}>
              <select aria-label="表現色"><option>モノクロ</option></select>
              <svg className="lead" width="20" height="20" viewBox="0 0 20 20"><path d="M.5.5H19.500V19.500H.5Z" fill="#fff" stroke="#666" /><path d="M0 0H20L0 20Z" fill="#4a4a4a" /></svg>
              <Tri />
            </SelectBox>
            <Spacer $w={0} />
            <SmallButton $w={30} $h={25} $blue aria-label="黒"><Chip $c="#000" /></SmallButton>
            <SmallButton $w={30} $h={25} $blue aria-label="白"><Chip $c="#fff" /></SmallButton>
          </SectionRow>
        </Section>
      </LayerPropsBody>
      <ScrollTrack />
    </LayerProps>
    <TabBar>
      <PanelMenu />
      <Tab $active $w={86}><Spacer $w={0} /><Stack /><Spacer $w={1} />レイヤー</Tab>
      <Tab $w={112}><Stack color="#888" /><Spacer $w={3} />レイヤー検索</Tab>
    </TabBar>
    <LayerControls>
      <LayerRow $h={25}>
        <SelectBox $w={132} $h={24} $pad={44}><select aria-label="合成モード"><option>通常</option></select><Tri /></SelectBox>
        <Spacer $w={5} />
        <Opacity type="range" defaultValue={100} aria-label="不透明度" />
        <Flex1 /><NumberInput $w={28} aria-label="不透明度の値" defaultValue="100" /><Spacer $w={1} /><Spin /><Spacer $w={3} />
      </LayerRow>
      <LayerRow $h={28} $line>
        <SmallButton $w={43} $h={24} aria-label="パレットカラー"><svg width="23" height="20" viewBox="0 0 23 20"><rect x=".5" y=".5" width="22" height="19" fill="#cfd3d8" stroke="#777" /></svg><Tri w={10} /></SmallButton>
        <Flex1 />
        <Btn label="クリッピング"><svg width="26" height="24" viewBox="0 0 26 24"><path d="M1 13V16Q5 22 13 22T25 16V13Z" fill="#888" /><ellipse cx="13" cy="13" rx="12" ry="5" fill="#555" stroke="#ccc" /><path d="M1 11V7Q5 2 13 2T25 7V11" fill="none" stroke="#555" strokeDasharray="3 2" /></svg></Btn>
        <Btn label="参照レイヤー"><svg width="23" height="24" viewBox="1 0 23 24"><path d="M9 9H16L18 23H7Z" fill="#eee" stroke="#666" /><path d="M13 9H16L18 23H13Z" fill="#777" /><path d="M9 4L12.500 1L16 4V9H9Z" fill="#555" /><path d="M2 1L9 5M2 8L9 6M23 1L16 5M23 8L16 6" stroke="#777" strokeDasharray="2 1" /></svg></Btn>
        <Btn label="下描き"><svg width="23" height="24" viewBox="-5 0 23 24"><Pencil /></svg></Btn>
        <Btn label="ロック"><Lock /></Btn><Spacer $w={1} />
        <Btn label="透明ピクセルをロック"><svg width="23" height="24" viewBox="0 0 23 24"><path d="M4 7V4Q4 1 7 1T10 4V7" fill="none" stroke="#666" strokeWidth="1.500" /><rect x="1.500" y="7" width="11" height="9" fill="#eee" stroke="#666" /><path d="M7 9V13" stroke="#555" strokeWidth="1.500" /><path d="M9.500 12.500H21.500V23.500H9.500Z" fill="#fff" stroke="#888" /><path d="M15.500 12.500H21.500V18H15.500ZM9.500 18H15.500V23.500H9.500Z" fill="#999" /></svg></Btn>
        <SmallButton $w={39} $h={24} $dim aria-label="マスク"><svg width="20" height="20" viewBox="0 0 20 20"><path d="M1 1H17V17H1Z" fill="#aaa" stroke="#888" /><path d="M3 13Q3 5 7 7L9 3L12 7L16 5L14 13Z" fill="#f4f4f4" /><path d="M12 12L19 19M19 12L12 19" stroke="#555" strokeWidth="2" /></svg><Tri w={10} /></SmallButton>
        <SmallButton $w={39} $h={24} $dim aria-label="定規"><svg width="20" height="20" viewBox="0 0 20 20"><path d="M3 1H11L3 9ZM18 1L2 18" fill="none" stroke="#666" strokeWidth="1.500" /><path d="M12 12L19 19M19 12L12 19" stroke="#555" strokeWidth="2" /></svg><Tri w={10} /></SmallButton>
      </LayerRow>
      <LayerRow $h={30}>
        <Btn label="表示切替"><Stack /></Btn><Flex1 />
        <Btn label="新規ラスターレイヤー"><Page /></Btn><Spacer $w={0} />
        <Btn label="新規ベクターレイヤー"><svg width="23" height="25" viewBox="0 0 23 25"><path d="M.5.5H17.500V24.500H.5Z" fill="#f9fbfc" stroke="#77797c" /><Cube x={12} y={13} /></svg></Btn>
        <Btn label="新規フォルダー"><svg width="25" height="25" viewBox="0 0 25 25"><path d="M.5 20V4L3 2H9L11 4.500H21V20Z" fill="#aaa" stroke="#777" /><path d="M13.500 9.500H24.500V19L20 24.500H13.500Z" fill="#f9fbfc" stroke="#888" /></svg></Btn>
        <Btn label="下へ転写"><svg width="21" height="22" viewBox="1 0 21 22" opacity=".5"><path d="M2 14L11 9L21 14L11 20Z" fill="#999" /><path d="M2 9L11 4L21 9L11 14Z" fill="#ddd" stroke="#888" /><path d="M11 1V8L8 7L11.500 12L15 7L12 8" fill="#777" stroke="#777" /></svg></Btn>
        <Btn label="下と結合"><svg width="22" height="22" viewBox="1 0 22 22"><path d="M2 6L12 1L22 6V14L12 20L2 14Z" fill="#555" /><path d="M3 12L12 7L21 12L12 18Z" fill="#eee" stroke="#444" strokeDasharray="2 1" /><path d="M12 4V10M9 9H15L12 14Z" fill="#333" stroke="#333" strokeWidth="1.500" /></svg></Btn>
        <Btn label="マスク作成"><svg width="25" height="20" viewBox="0 0 25 20"><rect x=".5" y="1.500" width="24" height="17" fill="#6a6a6a" stroke="#555" /><circle cx="12.500" cy="10" r="5" fill="#fff" /></svg></Btn>
        <Btn label="マスク適用"><svg width="23" height="22" viewBox="0 0 23 22" opacity=".5"><path d="M4 1V14M1 13H7L4 19Z" fill="#777" stroke="#777" strokeWidth="2" /><path d="M8 6L14 2L22 10L16 14H8Z" fill="#bbb" stroke="#777" /><circle cx="15" cy="15" r="4" fill="#ddd" stroke="#888" /></svg></Btn>
        <Btn label="レイヤー削除"><Trash /></Btn>
      </LayerRow>
    </LayerControls>
    <LayerList>
      <Layers>
        {layers.map((l, i) => (
          <Layer key={i} $folder={l.folder}>
            <Gutter $w={25}><Eye /></Gutter>
            <Gutter $w={22}>
              {l.on && <svg width="18" height="16" viewBox="0 0 18 16"><path d="M1 15Q3 9 7 7L10 10Q6 14 1 15Z" fill="#eee" stroke="#555" /><path d="M8 7L15 1L17 3L11 10Z" fill="#444" /></svg>}
            </Gutter>
            <LayerBody $pad={l.pad} $line={l.line} $on={l.on}>
              {l.lead}
              <LayerText><Mode>100 % 通常</Mode><Name>{l.name || '\u00a0'}</Name></LayerText>
              {l.pencil && <Pencil dim={l.pencil === 'dim'} />}
            </LayerBody>
          </Layer>
        ))}
      </Layers>
      <ScrollTrack $w={14}>
        <ScrollArrow aria-label="上へ"><Tri w={8} up /></ScrollArrow>
        <ScrollThumb $top={0} $h={246}><Grip /></ScrollThumb>
      </ScrollTrack>
      <Callout />
    </LayerList>
  </Dock>
);

export default function App() {
  return (
    <>
      <Global />
      <App_>
        <Workspace>
          <CommandBar>
            <CommandGroup $w={74}><svg width="70" height="5" viewBox="0 0 70 5"><path d="M0 0H4M42 1.500H63" stroke="#a9abae" strokeWidth="2" /><path d="M11 0H35V1.500H11Z" fill="#c2c5c9" /></svg></CommandGroup>
            <Spacer $w={5} /><CommandButton $blue aria-label="表示" /><CommandButton aria-label="グリッド" />
            <CommandGroup $w={67}><svg width="60" height="5" viewBox="0 0 60 5"><path d="M10 2L13 0M22 0L24 2" stroke="#38b4e4" strokeWidth="2" /><path d="M38 0H58" stroke="#a9abae" /></svg></CommandGroup>
            <CommandGroup $w={160}><svg width="150" height="5" viewBox="0 0 150 5" fill="#555"><path d="M8 2L12 0ZM17 1h4M27 0l3 2M108 0h4v1.500h-4zM137 0h6l-3 2z" stroke="#555" /></svg></CommandGroup>
            <Spacer $w={9} />
            <svg width="200" height="5" viewBox="0 0 200 5"><path d="M0 .5H20M32 0v2M39 0v1.500M47 0v2M61 0v1M78 0v1.500M94 1h6M150 0v1.500M160 0v1M168 0v2M180 .5h15" stroke="#aaacb0" strokeWidth="1.500" /></svg>
          </CommandBar>
          <DocTabs><DocMenu aria-label="タブ一覧"><Tri w={8} /></DocMenu></DocTabs>
          <Canvas />
        </Workspace>
        <Tools />
        <SubDock />
        <LayerDock />
      </App_>
    </>
  );
}
